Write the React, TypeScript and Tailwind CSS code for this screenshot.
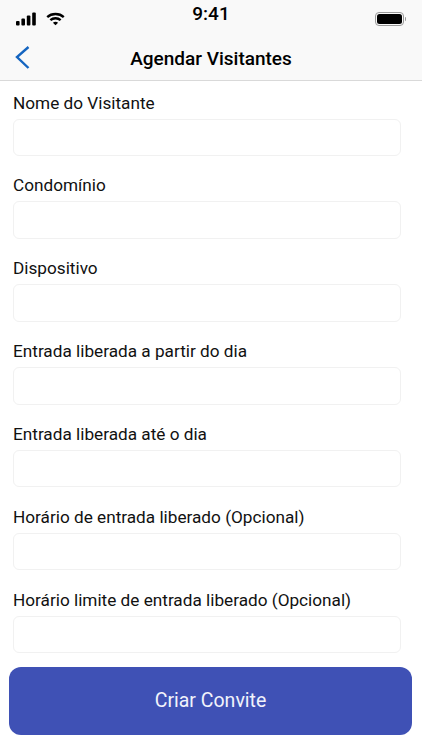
const FIELDS = [
  "Nome do Visitante",
  "Condomínio",
  "Dispositivo",
  "Entrada liberada a partir do dia",
  "Entrada liberada até o dia",
  "Horário de entrada liberado (Opcional)",
  "Horário limite de entrada liberado (Opcional)",
];

function StatusBar() {
  return (
    <div className="flex h-[37px] items-center justify-between pl-[16px] pr-[16px]">
      <div className="flex items-center gap-[9px]">
        <svg width="21" height="14" viewBox="0 0 21 14" fill="#000">
          <rect x="0" y="9" width="3.6" height="4.5" rx="1" />
          <rect x="5.4" y="6.5" width="3.6" height="7" rx="1" />
          <rect x="10.8" y="3.5" width="3.6" height="10" rx="1" />
          <rect x="16.2" y="0.5" width="3.6" height="13" rx="1" />
        </svg>
        <svg width="19" height="14" viewBox="0 0 20 14" fill="none" stroke="#000" strokeWidth="2.5">
          <path d="M1.3 5 C6 0.6 14 0.6 18.7 5" />
          <path d="M4.6 8.3 C7.6 5.6 12.4 5.6 15.4 8.3" />
          <path d="M10 13.6 L7.3 10.9 C8.8 9.7 11.2 9.7 12.7 10.9 Z" fill="#000" stroke="none" />
        </svg>
      </div>
      <span className="absolute left-0 right-0 top-[3px] text-center text-[19px] leading-[22px] font-medium text-black">9:41</span>
      <div className="flex items-center">
        <div className="flex h-[14px] w-[29px] items-center justify-center rounded-[4px] border border-[#9a9a9a]">
          <div className="h-[10px] w-[25px] rounded-[2.5px] bg-black" />
        </div>
        <div className="ml-[1px] h-[4px] w-[1.5px] rounded-r-sm bg-[#9a9a9a]" />
      </div>
    </div>
  );
}

function NavBar() {
  return (
    <div className="relative flex h-[44px] items-center justify-center border-b border-[#d9d9d9]">
      <svg className="absolute left-[15px] top-[9px]" width="16" height="24" viewBox="0 0 16 24" fill="none" stroke="#1565c0" strokeWidth="2.4">
        <path d="M13.5 1 L2 11 L13.5 22" />
      </svg>
      <span className="text-[19px] leading-[24px] font-medium text-black">Agendar Visitantes</span>
    </div>
  );
}

export default function App() {
  return (
    <div className="relative flex h-[750px] w-[422px] flex-col overflow-hidden bg-white font-['Roboto',sans-serif]">
      <div className="bg-[#f9f9f9]">
        <StatusBar />
        <NavBar />
      </div>
      <div className="flex flex-col gap-[7.85px] pl-[13px] pr-[21px] pt-[9.58px]">
        {FIELDS.map((label) => (
          <div key={label} className="flex h-[75px] flex-col">
            <label className="text-[17.2px] leading-[24px] text-[#111]">{label}</label>
            <div className="mt-[4px] h-[37.5px] rounded-[6px] border border-[#f1f1f1] bg-white" />
          </div>
        ))}
      </div>
      <div className="mt-auto pb-[15px] pl-[9px] pr-[10px]">
        <button type="button" className="h-[68.5px] w-full rounded-[12px] bg-[#3f51b5] text-[19.5px] text-[#f1f3fb]">
          Criar Convite
        </button>
      </div>
    </div>
  );
}
